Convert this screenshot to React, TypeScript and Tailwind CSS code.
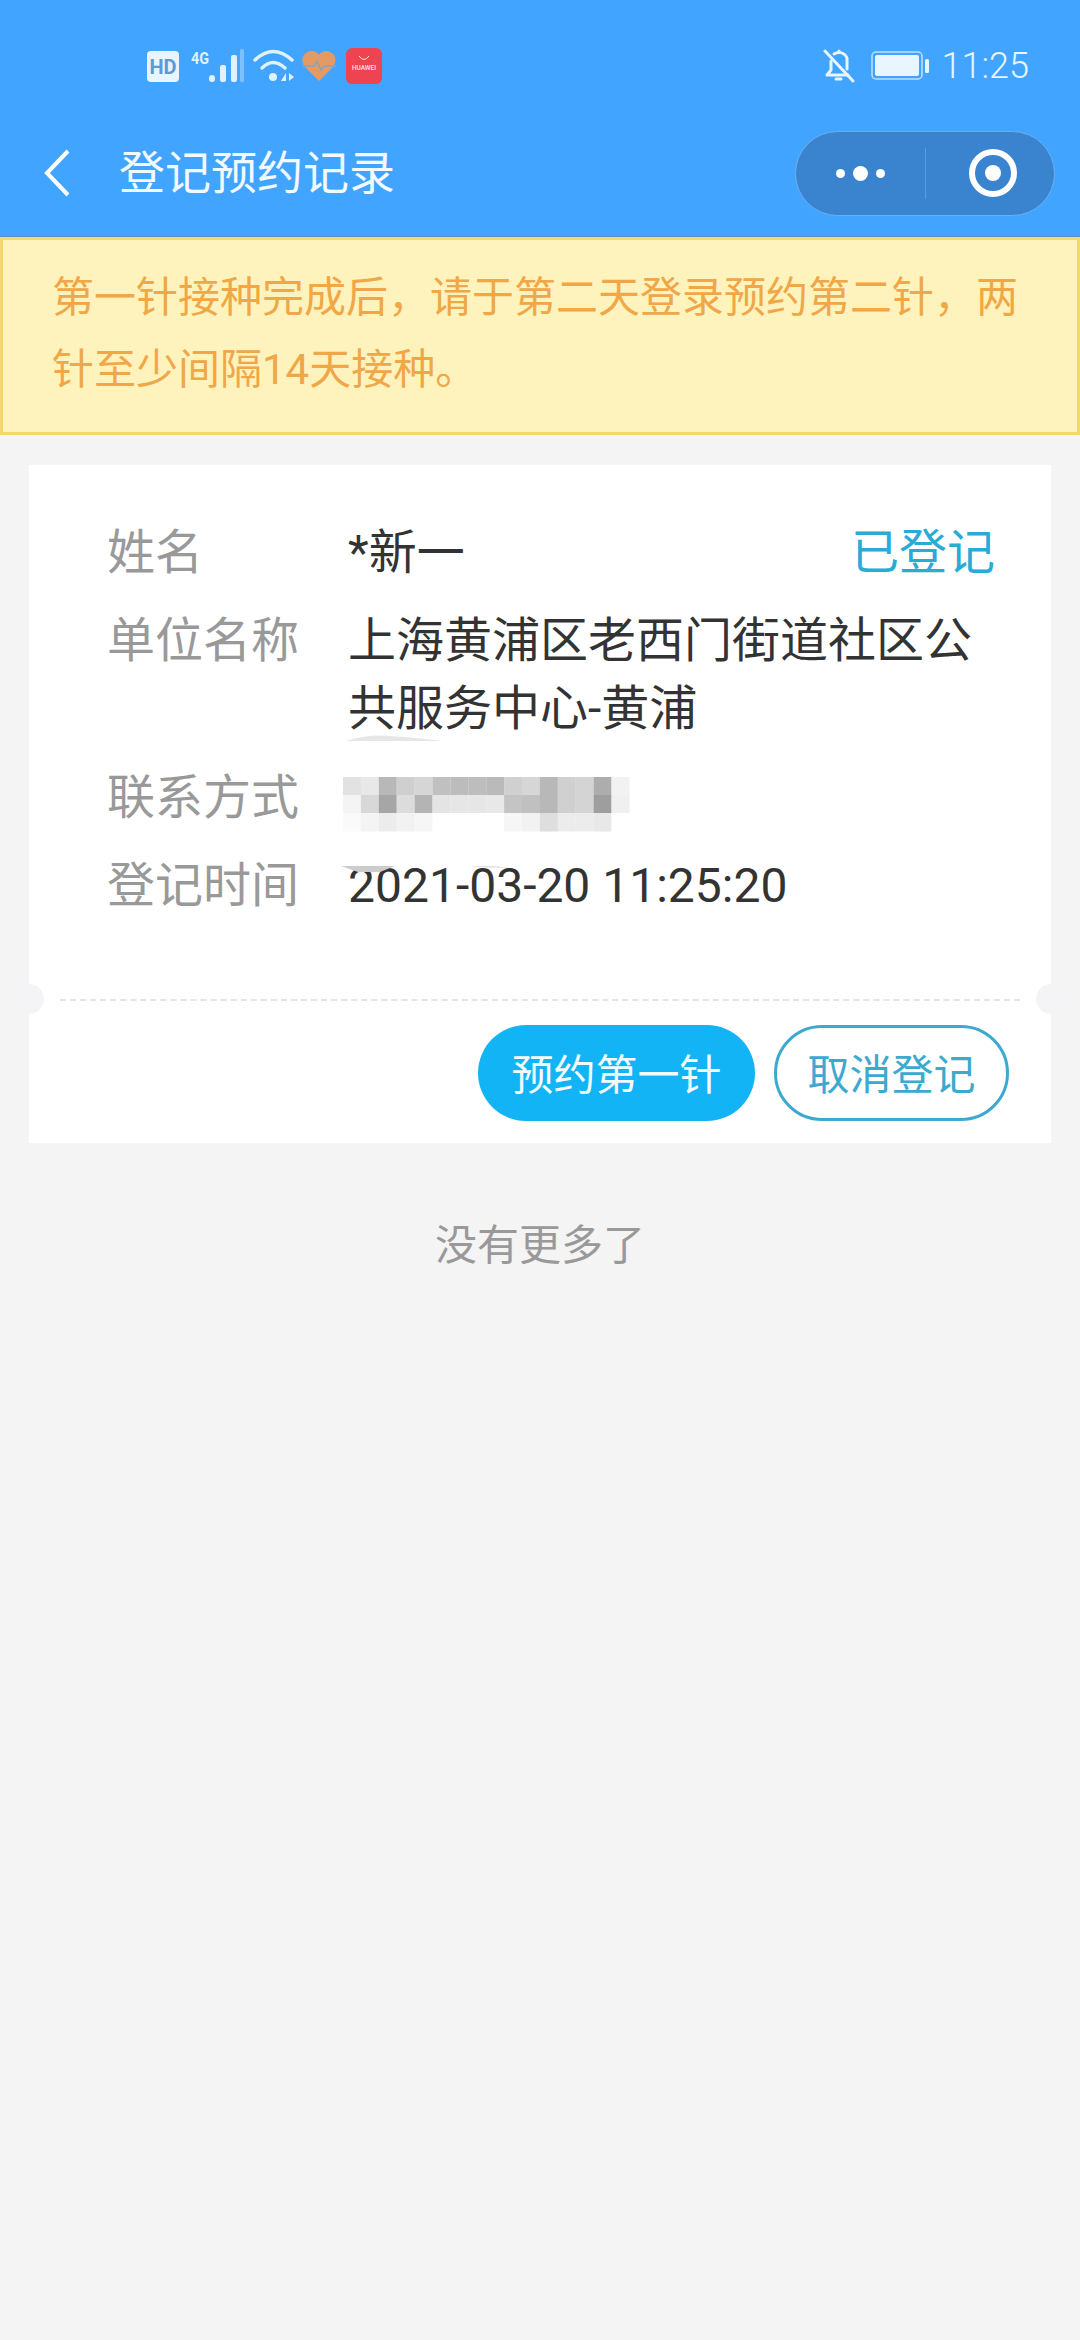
const FONT = "font-['Roboto','Noto_Sans_CJK_SC',sans-serif]"

// mosaic over the phone number, one row of greys per line
const MOSAIC = [
  ['#e2e2e2', '#e8e8e8', '#b8b8b8', '#cfcfcf', '#d6d6d6', '#c0c0c0', '#bcbcbc', '#bdbdbd', '#bababa', '#d0d0d0', '#d6d6d6', '#b8b8b8', '#d0d0d0', '#d4d4d4', '#adadad', '#f2f2f2'],
  ['#f4f4f4', '#d8d8d8', '#a6a6a6', '#dcdcdc', '#b4b4b4', '#e4e4e4', '#e6e6e6', '#e6e6e6', '#e8e8e8', '#c4c4c4', '#c0c0c0', '#b8b8b8', '#d0d0d0', '#d4d4d4', '#9e9e9e', '#f0f0f0'],
  ['#fafafa', '#f4f4f4', '#ececec', '#f2f2f2', '#f6f6f6', '#ffffff', '#ffffff', '#ffffff', '#ffffff', '#f6f6f6', '#f2f2f2', '#dedede', '#ececec', '#ececec', '#e8e8e8', '#ffffff'],
]

function StatusIcons() {
  return (
    <svg width="240" height="40" viewBox="0 0 240 40" className="ml-[147px]">
      <rect x="0" y="5" width="32" height="31" rx="4" fill="#e8f4ff" />
      <text x="16" y="28" textAnchor="middle" fontSize="20" fontWeight="700" fontFamily="Roboto" fill="#5b9ad6">HD</text>
      <text x="44" y="18" fontSize="17" fontWeight="700" fontFamily="Roboto" textLength="18" lengthAdjust="spacingAndGlyphs" fill="#dff0ff">4G</text>
      <rect x="62" y="29" width="6" height="7" rx="3" fill="#dff0ff" />
      <rect x="73" y="19" width="6" height="17" rx="2" fill="#dff0ff" />
      <rect x="84" y="9" width="6" height="27" rx="2" fill="#dff0ff" />
      <rect x="93" y="3" width="4" height="33" rx="1.500" fill="#7cc0ff" />
      <g fill="none" stroke="#dff0ff" strokeWidth="3.500" strokeLinecap="round">
        <path d="M108 14 Q126 -3 145 14" />
        <path d="M115 22 Q126 11 138 22" />
      </g>
      <circle cx="126" cy="31" r="4" fill="#dff0ff" />
      <path d="M134 35 L139 27 V35 Z M142 27 L147 31 L142 35 Z" fill="#dff0ff" />
      <path d="M172 35 L159 22 C151 13 158 5 165 5 C168 5 171 7 172 9 C173 7 176 5 179 5 C186 5 193 13 185 22 Z" fill="#e59a63" />
      <path d="M155 20 H167 L170 15 L174 24 L177 20 H189" fill="none" stroke="#7ea6c8" strokeWidth="1.500" />
      <rect x="199" y="2" width="36" height="36" rx="6" fill="#ee4350" />
      <path d="M212 10 Q217 17 222 10" fill="none" stroke="#ffe6e6" strokeWidth="1" />
      <text x="217" y="24" textAnchor="middle" fontSize="6.500" fontFamily="Roboto" fontWeight="500" fill="#ffe6e6">HUAWEI</text>
    </svg>
  )
}

function StatusRight() {
  return (
    <div className="mr-[51px] ml-auto flex items-center">
      <svg width="32" height="34" viewBox="0 0 32 34" fill="none" stroke="#e8f4ff" strokeWidth="3" strokeLinecap="round" strokeLinejoin="round">
        <path d="M2 2 L30 32" />
        <path d="M8 12 V21 L4 26 H25" />
        <path d="M11 5 C14 3 21 2 24 9 V20" />
        <path d="M16 2 V3 M13 30 H18" />
      </svg>
      <svg width="60" height="30" viewBox="0 0 60 30" className="ml-[16px]">
        <rect x="1" y="1" width="50" height="27" rx="4" fill="none" stroke="#bfe0ff" strokeWidth="1.500" />
        <rect x="4" y="4" width="44" height="21" rx="2" fill="#e9f5ff" />
        <rect x="54" y="8" width="4" height="14" rx="1.500" fill="#e9f5ff" />
      </svg>
      <span className="ml-[11px] text-[36px] leading-none font-light text-[#e8f4ff]">11:25</span>
    </div>
  )
}

function Capsule() {
  return (
    <div className="mr-[25px] ml-auto flex h-[85px] w-[260px] items-center rounded-full border border-[#6aaef0] bg-[#3a84cf]">
      <div className="flex w-[129px] items-center justify-center gap-[8px]">
        <span className="h-[9px] w-[9px] rounded-full bg-white" />
        <span className="h-[15px] w-[15px] rounded-full bg-white" />
        <span className="h-[9px] w-[9px] rounded-full bg-white" />
      </div>
      <div className="h-[51px] w-px bg-[#5c9be0]" />
      <div className="flex flex-1 items-center justify-center pl-[5px]">
        <div className="flex h-[48px] w-[48px] items-center justify-center rounded-full border-[6px] border-white">
          <span className="h-[16px] w-[16px] rounded-full bg-white" />
        </div>
      </div>
    </div>
  )
}

function Row({ label, children }: { label: string; children: React.ReactNode }) {
  return (
    <div className="flex text-[48px] leading-[68px]">
      <div className="w-[241px] shrink-0 text-[#999999]">{label}</div>
      <div className="flex min-w-0 flex-1 justify-between text-[#333333]">{children}</div>
    </div>
  )
}

export default function App() {
  return (
    <main className={`${FONT} flex min-h-[2340px] flex-col bg-[#f4f4f4]`}>
      {/* Header */}
      <div className="border-b border-[#5b94c4] bg-[#41a5ff]">
        <div className="flex h-[130px] items-center pt-[2px]">
          <StatusIcons />
          <StatusRight />
        </div>
        <div className="flex h-[106px] items-center pb-[20px]">
          <svg width="26" height="48" viewBox="0 0 26 48" fill="none" stroke="#ffffff" strokeWidth="4" className="ml-[44px]">
            <path d="M24 2 L3 24 L24 46" />
          </svg>
          <h1 className="ml-[49px] text-[46px] leading-none text-[#f2f9ff]">登记预约记录</h1>
          <Capsule />
        </div>
      </div>

      {/* Notice */}
      <div className="h-[198px] border-[3px] border-[#f1d86f] bg-[#fff3bd] pt-[22px] pr-[40px] pl-[49px] text-[42px] leading-[72px] text-[#f0a748]">
        第一针接种完成后，请于第二天登录预约第二针，两针至少间隔14天接种。
      </div>

      {/* Record card */}
      <div className="relative mx-[29px] mt-[30px] bg-white">
        <div className="flex flex-col pt-[54px] pr-[56px] pl-[78px]">
          <Row label="姓名">
            <span>*新一</span>
            <span className="text-[#29abd6]">已登记</span>
          </Row>
          <div className="mt-[20px]">
            <Row label="单位名称">
              <span>上海黄浦区老西门街道社区公共服务中心-黄浦</span>
            </Row>
          </div>
          <div className="mt-[21px]">
            <Row label="联系方式">
              <div className="relative h-[68px] w-full">
                {/* smudged phone number, with the stray bits of the blur above and below */}
                <svg width="300" height="142" viewBox="0 0 300 142" className="absolute top-[-31px] left-[-8px]">
                  <path d="M6 8 Q30 1 50 3 Q80 5 102 8 Z" fill="#e6e6e6" />
                  <path d="M1 133 H55 L40 139 H18 Z" fill="#cccccc" />
                  <path d="M129 134 Q150 131 169 135 Z" fill="#e2e2e2" />
                  {MOSAIC.map((row, y) =>
                    row.map((c, x) => (
                      <rect key={`${x}-${y}`} x={3 + x * 17.9} y={44 + y * 18} width="18" height="18.500" fill={c} />
                    ))
                  )}
                </svg>
              </div>
            </Row>
          </div>
          <div className="mt-[20px]">
            <Row label="登记时间">
              <span>2021-03-20 11:25:20</span>
            </Row>
          </div>
        </div>

        {/* Perforation */}
        <div className="mt-[79px] px-[31px]">
          <div className="border-t-2 border-dashed border-[#e4e4e4]" />
        </div>
        <span className="absolute top-[519px] left-[-15px] h-[30px] w-[30px] rounded-full bg-[#f4f4f6]" />
        <span className="absolute top-[519px] right-[-15px] h-[30px] w-[30px] rounded-full bg-[#f4f4f6]" />

        <div className="flex justify-end gap-[19px] pt-[24px] pr-[42px] pb-[22px] text-[42px]">
          <button className="h-[96px] w-[277px] rounded-full bg-[#13b4f5] pt-[4px] text-[#f2fbff]">预约第一针</button>
          <button className="h-[96px] w-[235px] rounded-full border-[3px] border-[#3ca9cf] pt-[4px] text-[#3ca9cf]">取消登记</button>
        </div>
      </div>

      <p className="mt-[74px] text-center text-[42px] leading-[58px] text-[#999999]">没有更多了</p>
    </main>
  )
}
